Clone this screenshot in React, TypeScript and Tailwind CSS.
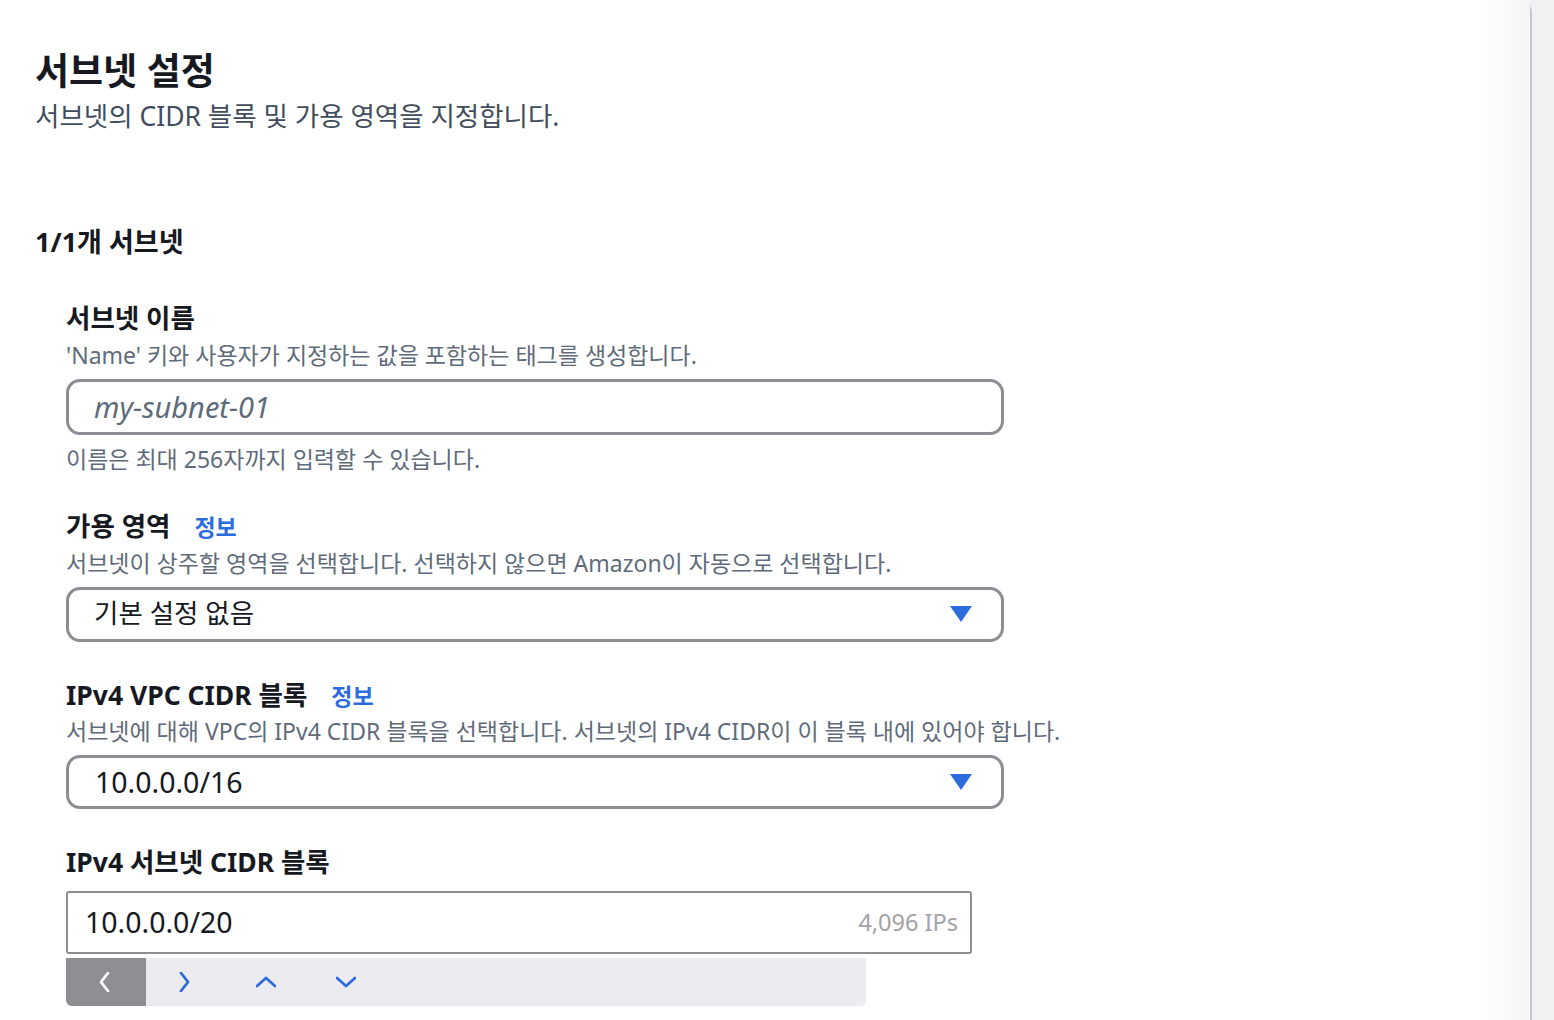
import React from "react";

const font = { fontFamily: '"Noto Sans", "Noto Sans CJK KR", sans-serif' };

function Caret() {
  return (
    <svg width="22" height="16" viewBox="0 0 22 16">
      <polygon points="0,0 22,0 11,16" fill="#2d6cdc" />
    </svg>
  );
}

function Chevron({ dir, color }: { dir: "left" | "right" | "up" | "down"; color: string }) {
  const pts: Record<string, string> = {
    left: "12,1 5,10 12,19",
    right: "5,1 12,10 5,19",
    up: "1,14 10,6 19,14",
    down: "1,6 10,14 19,6",
  };
  return (
    <svg width="20" height="20" viewBox="0 0 20 20">
      <polyline points={pts[dir]} fill="none" stroke={color} strokeWidth="2.8" strokeLinecap="round" strokeLinejoin="round" />
    </svg>
  );
}

function Label({ text, info }: { text: string; info?: boolean }) {
  return (
    <div className="flex items-baseline gap-[24px]">
      <span className="text-[26.5px] font-bold leading-[34px] text-[#16191f]">{text}</span>
      {info && <span className="text-[23px] font-bold text-[#2d6cdc]">정보</span>}
    </div>
  );
}

function Desc({ children }: { children: React.ReactNode }) {
  return <p className="text-[23px] leading-[30px] text-[#5f6b7a]">{children}</p>;
}

export default function App() {
  return (
    <div className="flex h-screen overflow-hidden bg-[#f1f1f3]" style={font}>
      <div className="-mt-[8px] flex w-[1532px] rounded-tr-[22px] border-r-2 border-[#c5c5cc] bg-white">
        <div className="flex-1 pl-[35px] pt-[54px]">
          <h1 className="text-[37px] font-bold leading-[50px] text-[#16191f]">서브넷 설정</h1>
          <p className="text-[26.5px] leading-[40px] text-[#414d5c]">서브넷의 CIDR 블록 및 가용 영역을 지정합니다.</p>

          <h2 className="mt-[89px] text-[27px] font-bold leading-[34px] text-[#16191f]">1/1개 서브넷</h2>

          <div className="mt-[42px] pl-[31px]">
            <Label text="서브넷 이름" />
            <div className="mt-[5px]">
              <Desc>'Name' 키와 사용자가 지정하는 값을 포함하는 태그를 생성합니다.</Desc>
            </div>
            <div className="mt-[9px] flex h-[56px] w-[938px] items-center rounded-[14px] border-[3px] border-[#8d8d94] pl-[25px]">
              <span className="text-[29px] italic text-[#5f6b7a]">my-subnet-01</span>
            </div>
            <div className="mt-[9px]">
              <Desc>이름은 최대 256자까지 입력할 수 있습니다.</Desc>
            </div>

            <div className="mt-[35px]">
              <Label text="가용 영역" info />
            </div>
            <div className="mt-[3px]">
              <Desc>서브넷이 상주할 영역을 선택합니다. 선택하지 않으면 Amazon이 자동으로 선택합니다.</Desc>
            </div>
            <div className="mt-[9px] flex h-[55px] w-[938px] items-center justify-between rounded-[14px] border-[3px] border-[#8d8d94] pl-[25px] pr-[29px]">
              <span className="text-[26.5px] text-[#16191f]">기본 설정 없음</span>
              <Caret />
            </div>

            <div className="mt-[36px]">
              <Label text="IPv4 VPC CIDR 블록" info />
            </div>
            <div className="mt-[3px]">
              <Desc>서브넷에 대해 VPC의 IPv4 CIDR 블록을 선택합니다. 서브넷의 IPv4 CIDR이 이 블록 내에 있어야 합니다.</Desc>
            </div>
            <div className="mt-[9px] flex h-[54px] w-[938px] items-center justify-between rounded-[14px] border-[3px] border-[#8d8d94] pl-[26px] pr-[29px]">
              <span className="text-[28.5px] text-[#16191f]">10.0.0.0/16</span>
              <Caret />
            </div>

            <div className="mt-[36px]">
              <Label text="IPv4 서브넷 CIDR 블록" />
            </div>
            <div className="mt-[12px] flex h-[63px] w-[906px] items-center justify-between rounded-[3px] border-2 border-[#8d8d94] pl-[17px] pr-[12px]">
              <span className="text-[28.5px] text-[#16191f]">10.0.0.0/20</span>
              <span className="text-[23.5px] text-[#a2a2a8]">4,096 IPs</span>
            </div>
            <div className="mt-[4px] flex h-[48px] w-[800px] overflow-hidden rounded-b-[6px] bg-[#ebebf0]">
              <div className="flex w-[80px] items-center justify-center bg-[#8e8e93]">
                <Chevron dir="left" color="#ffffff" />
              </div>
              <div className="flex w-[80px] items-center justify-center">
                <Chevron dir="right" color="#2d6cdc" />
              </div>
              <div className="flex w-[80px] items-center justify-center">
                <Chevron dir="up" color="#2d6cdc" />
              </div>
              <div className="flex w-[80px] items-center justify-center">
                <Chevron dir="down" color="#2d6cdc" />
              </div>
            </div>
          </div>
        </div>
        <div className="w-[52px] bg-linear-to-r from-white to-[#f5f5f6]" />
      </div>
    </div>
  );
}
